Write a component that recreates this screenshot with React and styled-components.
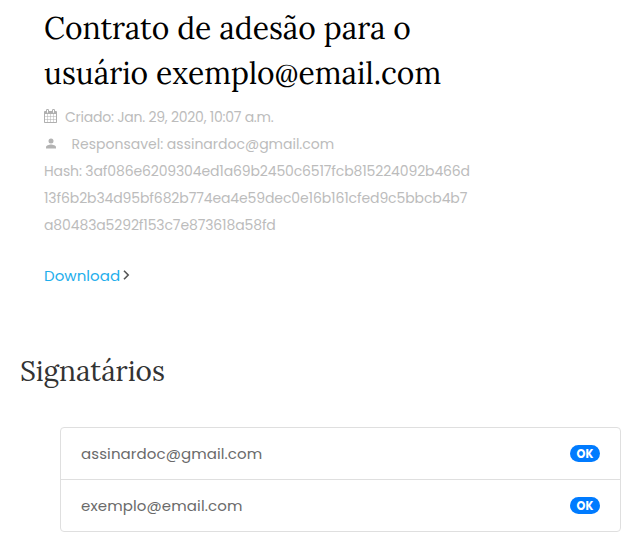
import React from "react";
import styled, { createGlobalStyle } from "styled-components";

const GlobalStyle = createGlobalStyle`
  *, *::before, *::after { box-sizing: border-box; }
  body {
    margin: 0;
    overflow: hidden;
    background: #fff;
    color: #6a6a6a;
    font-family: Poppins, Inter, sans-serif;
  }
`;

const Page = styled.main`
  height: 535px;
  padding: 6px 16px 0 20px;
  overflow: hidden;
`;

const Summary = styled.section`
  padding-left: 24px;
`;

const Title = styled.h1`
  margin: 0;
  color: #000;
  font: 400 30px/45px Lora, "Liberation Serif", serif;
`;

const Line = styled.span`
  display: block;
  white-space: nowrap;
  letter-spacing: ${(p) => p.$track || 0}px;
`;

const Meta = styled.div`
  margin-top: 8px;
  color: #bcbcbc;
  font-size: 14px;
  font-weight: 400;
  line-height: 27px;
`;

const MetaRow = styled.div`
  display: flex;
  align-items: center;
  height: 27px;
  gap: ${(p) => p.$gap}px;
`;

const CalendarIcon = styled.svg`
  width: 13px;
  height: 14px;
  margin-top: -3px;
  fill: #b0b0b0;
`;

const PersonIcon = styled.svg`
  width: 14px;
  height: 15px;
  margin-top: -3px;
  fill: #b3b3b3;
`;

const Download = styled.a`
  display: flex;
  align-items: center;
  gap: 3px;
  height: 27px;
  margin-top: 23px;
  color: #1eaeec;
  font-size: 15px;
  text-decoration: none;
`;

const Chevron = styled.svg`
  width: 7px;
  height: 10px;
  margin-top: -1px;
  fill: none;
  stroke: #555;
  stroke-width: 1.6;
`;

const Heading = styled.h2`
  margin: 62px 0 0;
  color: #333;
  font: 400 28px/40px Lora, "Liberation Serif", serif;
`;

const SignerList = styled.ul`
  width: 561px;
  margin: 36px 0 0 40px;
  padding: 0;
  list-style: none;
  border: 1px solid #dfdfdf;
  border-radius: 4px;
`;

const Signer = styled.li`
  display: flex;
  align-items: center;
  justify-content: space-between;
  height: 51px;
  padding: 0 20px;
  font-size: 15px;
  & + & {
    height: 52px;
    border-top: 1px solid #dfdfdf;
  }
`;

const Badge = styled.span`
  width: 30px;
  height: 17px;
  border-radius: 9px;
  background: #007bff;
  color: #fff;
  font-size: 11.25px;
  font-weight: 700;
  line-height: 19px;
  letter-spacing: 0.2px;
  text-align: center;
`;

const signers = [
  { email: "assinardoc@gmail.com", track: 0.1 },
  { email: "exemplo@email.com", track: 0.12 },
];

export default function App() {
  return (
    <>
      <GlobalStyle />
      <Page>
        <Summary>
          <Title>
            <Line>Contrato de adesão para o</Line>
            <Line>usuário exemplo@email.com</Line>
          </Title>
          <Meta>
            <MetaRow $gap={8}>
              <CalendarIcon viewBox="0 0 1664 1792">
                <path d="M128 1664h288v-288h-288v288zm352 0h320v-288h-320v288zm-352-352h288v-320h-288v320zm352 0h320v-320h-320v320zm-352-384h288v-288h-288v288zm736 736h320v-288h-320v288zm-384-736h320v-288h-320v288zm768 736h288v-288h-288v288zm-384-352h320v-320h-320v320zm-352-864v-288q0-13-9.5-22.5t-22.5-9.5h-64q-13 0-22.5 9.5t-9.5 22.5v288q0 13 9.5 22.5t22.5 9.5h64q13 0 22.5-9.5t9.5-22.5zm736 864h288v-320h-288v320zm-384-384h320v-288h-320v288zm384 0h288v-288h-288v288zm32-480v-288q0-13-9.5-22.5t-22.5-9.5h-64q-13 0-22.5 9.5t-9.5 22.5v288q0 13 9.5 22.5t22.5 9.5h64q13 0 22.5-9.5t9.5-22.5zm384-64v1280q0 52-38 90t-90 38h-1408q-52 0-90-38t-38-90v-1280q0-52 38-90t90-38h128v-96q0-66 47-113t113-47h64q66 0 113 47t47 113v96h384v-96q0-66 47-113t113-47h64q66 0 113 47t47 113v96h128q52 0 90 38t38 90z" />
              </CalendarIcon>
              <Line $track={-0.24}>Criado: Jan. 29, 2020, 10:07 a.m.</Line>
            </MetaRow>
            <MetaRow $gap={13.5}>
              <PersonIcon viewBox="0 0 14 15">
                <circle cx="7" cy="5" r="2.5" />
                <path d="M2 12.5v-1.3c0-1.7 3.3-2.6 5-2.6s5 .9 5 2.6v1.3z" />
              </PersonIcon>
              <Line>Responsavel: assinardoc@gmail.com</Line>
            </MetaRow>
            <Line $track={-0.13}>Hash: 3af086e6209304ed1a69b2450c6517fcb815224092b466d</Line>
            <Line $track={-0.11}>13f6b2b34d95bf682b774ea4e59dec0e16b161cfed9c5bbcb4b7</Line>
            <Line $track={-0.12}>a80483a5292f153c7e873618a58fd</Line>
          </Meta>
          <Download href="#">
            <Line $track={0.05}>Download</Line>
            <Chevron viewBox="0 0 7 10">
              <path d="M1 .8 5.2 5 1 9.2" />
            </Chevron>
          </Download>
        </Summary>
        <Heading>
          <Line>Signatários</Line>
        </Heading>
        <SignerList>
          {signers.map((s) => (
            <Signer key={s.email}>
              <Line $track={s.track}>{s.email}</Line>
              <Badge>OK</Badge>
            </Signer>
          ))}
        </SignerList>
      </Page>
    </>
  );
}
